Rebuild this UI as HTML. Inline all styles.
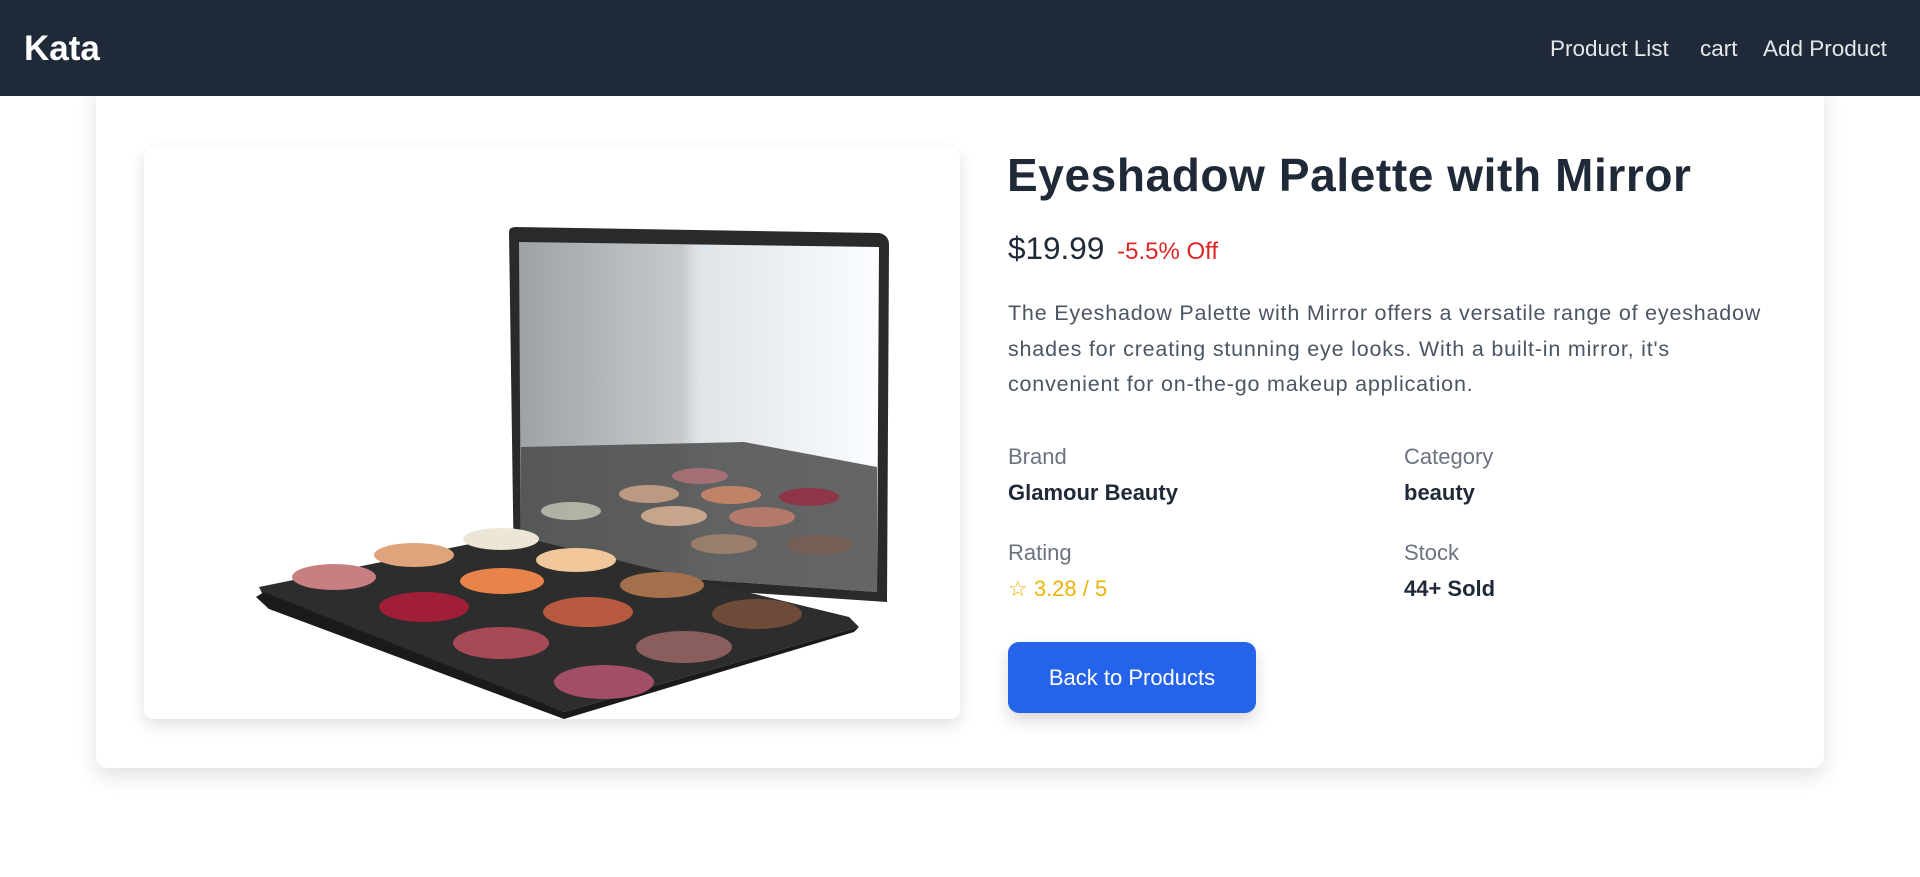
<!DOCTYPE html>
<html><head><meta charset="utf-8"><style>
*{margin:0;padding:0;box-sizing:border-box}
body{width:1920px;height:877px;background:#fff;font-family:"Liberation Sans",sans-serif;position:relative;overflow:hidden}
.nav{position:absolute;left:0;top:0;width:1920px;height:96px;background:#1f2937;z-index:2}
.logo{position:absolute;left:24px;top:29px;color:#fff;font-weight:bold;font-size:35px;line-height:40px}
.links{position:absolute;top:36px;font-size:22.5px;color:#e5e7eb;line-height:26px}
.card{position:absolute;left:96px;top:80px;width:1728px;height:688px;background:#fff;border-radius:12px;box-shadow:0 8px 20px rgba(0,0,0,.12);z-index:1}
.img{position:absolute;left:144px;top:147px;width:816px;height:572px;background:#fff;border-radius:10px;box-shadow:0 6px 16px rgba(0,0,0,.12);overflow:hidden;z-index:1}
.abs{position:absolute;z-index:3;white-space:nowrap}
h1{font-size:46px;font-weight:bold;color:#1f2937;letter-spacing:0.6px}
.lbl{font-size:22px;color:#6b7280}
.val{font-size:22px;font-weight:bold;color:#1f2937}
.btn{position:absolute;left:1008px;top:642px;width:248px;height:71px;background:#2563eb;border-radius:11px;color:#fff;font-size:22px;line-height:71px;text-align:center;box-shadow:0 8px 16px rgba(0,0,0,.15);z-index:3}
</style></head><body>
<div class="nav">
<div class="logo">Kata</div>
<div class="links" style="left:1550px">Product List</div>
<div class="links" style="left:1700px">cart</div>
<div class="links" style="left:1763px">Add Product</div>
</div>
<div class="card"></div>
<div class="img">
<svg width="816" height="572" viewBox="0 0 816 572">
<defs><linearGradient id="m" x1="0" x2="1"><stop offset="0" stop-color="#9ea2a5"/><stop offset=".45" stop-color="#c6cacd"/><stop offset=".5" stop-color="#dfe4e8"/><stop offset="1" stop-color="#fbfdff"/></linearGradient></defs>
<path d="M365 85 Q365 80 372 80 L735 86 Q745 88 745 98 L743 455 L370 430 Z" fill="#2a2a2a"/>
<path d="M375 95 L735 100 L733 445 L377 420 Z" fill="url(#m)"/>
<path d="M377 300 L600 295 L733 320 L733 445 L377 420 Z" fill="#4a4a4a" opacity=".85"/>
<path d="M115 440 L370 388 L705 470 L715 480 L420 565 L125 460 Z" fill="#2d2d2d"/>
<path d="M112 450 L125 462 L420 572 L710 485 L715 480 L420 565 L120 445Z" fill="#1a1a1a"/>
<g>
<ellipse cx="357" cy="392" rx="38" ry="11" fill="#ece6d6"/>
<ellipse cx="270" cy="408" rx="40" ry="12" fill="#e0a47c"/>
<ellipse cx="432" cy="413" rx="40" ry="12" fill="#f1c79a"/>
<ellipse cx="190" cy="430" rx="42" ry="13" fill="#c87f82"/>
<ellipse cx="358" cy="434" rx="42" ry="13" fill="#e8844a"/>
<ellipse cx="518" cy="438" rx="42" ry="13" fill="#a4704c"/>
<ellipse cx="280" cy="460" rx="45" ry="15" fill="#a01e38"/>
<ellipse cx="444" cy="465" rx="45" ry="15" fill="#b85a40"/>
<ellipse cx="613" cy="467" rx="45" ry="15" fill="#6e4a38"/>
<ellipse cx="357" cy="496" rx="48" ry="16" fill="#a84a56"/>
<ellipse cx="540" cy="500" rx="48" ry="16" fill="#8a5e5c"/>
<ellipse cx="460" cy="535" rx="50" ry="17" fill="#a24e66"/>
</g>
<g opacity=".8">
<ellipse cx="556" cy="329" rx="28" ry="8" fill="#b57478"/>
<ellipse cx="505" cy="347" rx="30" ry="9" fill="#d6a88c"/>
<ellipse cx="587" cy="348" rx="30" ry="9" fill="#d88c6a"/>
<ellipse cx="665" cy="350" rx="30" ry="9" fill="#9a2a44"/>
<ellipse cx="427" cy="364" rx="30" ry="9" fill="#c8c8b8"/>
<ellipse cx="530" cy="369" rx="33" ry="10" fill="#e2b89a"/>
<ellipse cx="618" cy="370" rx="33" ry="10" fill="#c8806e"/>
<ellipse cx="580" cy="397" rx="33" ry="10" fill="#a8866e"/>
<ellipse cx="675" cy="398" rx="33" ry="10" fill="#7a5e52"/>
</g>
</svg>
</div>
<div class="abs" style="left:1007px;top:148px"><h1>Eyeshadow Palette with Mirror</h1></div>
<div class="abs" style="left:1008px;top:230px;font-size:31.5px;color:#1f2937">$19.99 <span style="font-size:24px;color:#dc2626;margin-left:4px">-5.5% Off</span></div>
<div class="abs" style="left:1008px;top:296px;font-size:21.5px;line-height:35.5px;color:#4b5563;letter-spacing:0.8px">The Eyeshadow Palette with Mirror offers a versatile range of eyeshadow<br>shades for creating stunning eye looks. With a built-in mirror, it's<br>convenient for on-the-go makeup application.</div>
<div class="abs lbl" style="left:1008px;top:444px">Brand</div>
<div class="abs val" style="left:1008px;top:480px">Glamour Beauty</div>
<div class="abs lbl" style="left:1404px;top:444px">Category</div>
<div class="abs val" style="left:1404px;top:480px">beauty</div>
<div class="abs lbl" style="left:1008px;top:540px">Rating</div>
<div class="abs" style="left:1008px;top:576px;font-size:22px;color:#eab308">☆ 3.28 / 5</div>
<div class="abs lbl" style="left:1404px;top:540px">Stock</div>
<div class="abs val" style="left:1404px;top:576px">44+ Sold</div>
<div class="btn">Back to Products</div>
</body></html>
